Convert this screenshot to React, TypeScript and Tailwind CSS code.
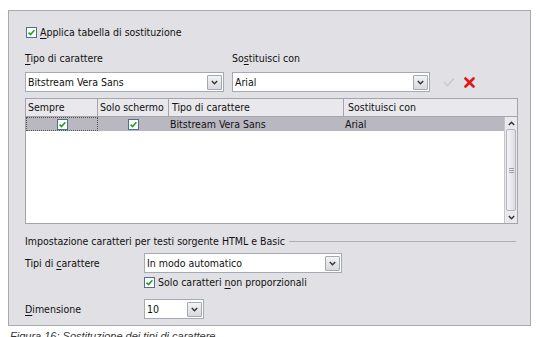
import React from "react";

const Check = ({ className = "" }: { className?: string }) => (
  <svg width="11" height="11" viewBox="0 0 11 11" className={className}>
    <rect x="0.5" y="0.5" width="10" height="10" fill="#ffffff" stroke="#4f6f8f" />
    <path d="M2.6 5.6 L4.5 7.6 L8.4 3.2" fill="none" stroke="#21a121" strokeWidth="1.6" />
  </svg>
);

const DropBtn = () => (
  <div className="w-[15px] h-[15px] border border-[#a3aab4] bg-gradient-to-b from-[#f4f4f6] to-[#d8d8de] flex items-center justify-center rounded-[1px]">
    <svg width="7" height="5" viewBox="0 0 7 5">
      <path d="M0.8 1 L3.5 3.8 L6.2 1" fill="none" stroke="#333" strokeWidth="1.4" />
    </svg>
  </div>
);

const Combo = ({ text, w }: { text: string; w: string }) => (
  <div className={`${w} h-[20px] bg-white border border-[#a3aab4] flex items-center justify-between pl-[2px] pr-[1px]`}>
    <span>{text}</span>
    <DropBtn />
  </div>
);

const U = ({ c }: { c: string }) => <span className="underline underline-offset-2">{c}</span>;

export default function App() {
  return (
    <div className="w-[538px] h-[337px] bg-white overflow-hidden font-['DejaVu_Sans_Condensed','Liberation_Sans',sans-serif] text-[10.5px] text-[#111] leading-none">
      <div className="ml-[8px] mt-[10px] w-[523px] h-[316px] bg-[#e1e0e4] border border-[#a9a9ad] pl-[16px] pr-[14px] flex flex-col">
        <div className="mt-[16px] h-[11px] flex items-center gap-[3px] pl-[1px]">
          <Check />
          <span>
            <U c="A" />pplica tabella di sostituzione
          </span>
        </div>
        <div className="mt-[15px] h-[11px] flex items-center">
          <span className="w-[207px]">
            <U c="T" />ipo di carattere
          </span>
          <span>
            So<U c="s" />tituisci con
          </span>
        </div>
        <div className="mt-[8px] flex items-center">
          <Combo text="Bitstream Vera Sans" w="w-[199px]" />
          <div className="w-[8px]" />
          <Combo text="Arial" w="w-[198px]" />
          <svg width="12" height="10" viewBox="0 0 12 10" className="ml-[13px]">
            <path d="M1 5 L4.5 8.5 L11 1.5" fill="none" stroke="#c9c9cf" strokeWidth="1.6" />
          </svg>
          <svg width="11" height="11" viewBox="0 0 11 11" className="ml-[9px]">
            <path d="M1.5 1.5 L9.5 9.5 M9.5 1.5 L1.5 9.5" fill="none" stroke="#e01818" strokeWidth="2.6" strokeLinecap="round" />
          </svg>
        </div>
        <div className="mt-[6px] w-[493px] h-[126px] bg-white border border-[#a5a5a9] flex flex-col">
          <div className="h-[18px] flex bg-[#e9e8ec] border-b border-[#a5a5a9]">
            <div className="w-[72px] border-r border-[#a5a5a9] pl-[2px] flex items-center">Sempre</div>
            <div className="w-[71px] border-r border-[#a5a5a9] pl-[2px] flex items-center">Solo schermo</div>
            <div className="w-[175px] border-r border-[#a5a5a9] pl-[3px] flex items-center">Tipo di carattere</div>
            <div className="flex-1 pl-[4px] flex items-center">Sostituisci con</div>
          </div>
          <div className="flex-1 flex">
            <div className="flex-1 flex flex-col">
              <div className="h-[14px] bg-[#b9b8c1] flex">
                <div className="w-[72px] border border-dotted border-[#555] flex items-center justify-center">
                  <Check />
                </div>
                <div className="w-[71px] flex items-center justify-center">
                  <Check />
                </div>
                <div className="w-[175px] pl-[1px] flex items-center">Bitstream Vera Sans</div>
                <div className="flex-1 pl-[1px] flex items-center">Arial</div>
              </div>
            </div>
            <div className="w-[13px] bg-[#e9e9ee] border-l border-[#c5c5cc] flex flex-col">
              <div className="h-[12px] flex items-center justify-center">
                <svg width="7" height="5" viewBox="0 0 7 5">
                  <path d="M0.8 4 L3.5 1.2 L6.2 4" fill="none" stroke="#333" strokeWidth="1.4" />
                </svg>
              </div>
              <div className="flex-1 mx-[1px] border border-[#b4b4bf] rounded-[2px] bg-gradient-to-r from-[#f3f3f7] to-[#dcdce4] flex items-center justify-center">
                <div className="w-[5px] h-[5px] border-y border-[#a0a0aa] flex items-center">
                  <div className="w-full h-px bg-[#a0a0aa]" />
                </div>
              </div>
              <div className="h-[12px] flex items-center justify-center">
                <svg width="7" height="5" viewBox="0 0 7 5">
                  <path d="M0.8 1 L3.5 3.8 L6.2 1" fill="none" stroke="#333" strokeWidth="1.4" />
                </svg>
              </div>
            </div>
          </div>
        </div>
        <div className="mt-[12px] h-[11px] flex items-center gap-[4px]">
          <span className="whitespace-nowrap">Impostazione caratteri per testi sorgente HTML e Basic</span>
          <div className="flex-1 h-px bg-[#b0b0b4]" />
        </div>
        <div className="mt-[6px] flex items-center">
          <span className="w-[119px]">
            Tipi di <U c="c" />arattere
          </span>
          <Combo text="In modo automatico" w="w-[198px]" />
        </div>
        <div className="mt-[4px] h-[11px] flex items-center gap-[3px] pl-[119px]">
          <Check />
          <span>
            Solo caratteri <U c="n" />on proporzionali
          </span>
        </div>
        <div className="mt-[11px] flex items-center">
          <span className="w-[119px]">
            <U c="D" />imensione
          </span>
          <Combo text="10" w="w-[60px]" />
        </div>
      </div>
      <div className="mt-[5px] ml-[10px] text-[11px] text-[#333] font-['Liberation_Sans',sans-serif] italic">
        Figura 16: Sostituzione dei tipi di carattere
      </div>
    </div>
  );
}
